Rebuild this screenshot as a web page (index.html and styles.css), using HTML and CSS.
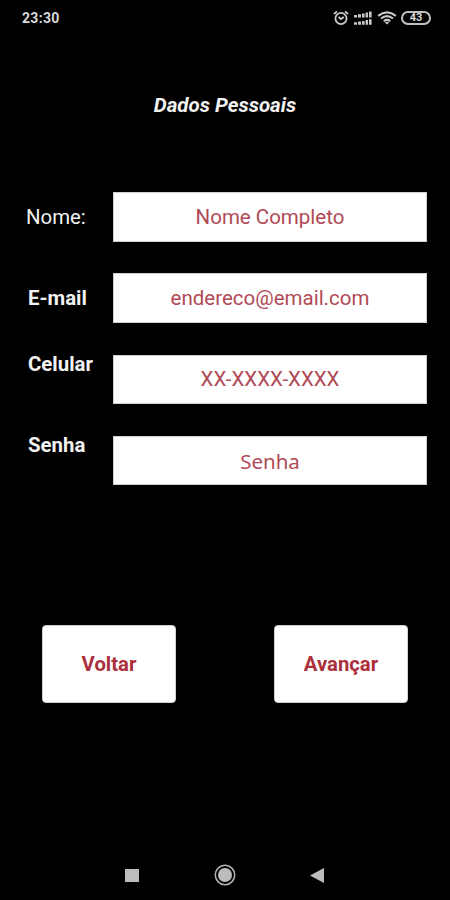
FILE: index.html
```html
<!DOCTYPE html>
<html lang="pt-BR">
<head>
    <meta charset="UTF-8">
    <meta name="viewport" content="width=device-width, initial-scale=1.0">
    <title>Dados Pessoais</title>
    <link rel="stylesheet" href="styles.css">
</head>
<body>
    <div class="status-bar">
        <span class="clock">23:30</span>
        <div class="status-icons">
            <svg class="icon-alarm" width="16" height="16" viewBox="0 0 16 16" fill="none" stroke="#c8c8c8" stroke-width="1.8">
                <circle cx="8" cy="8.5" r="5.6"/>
                <path d="M5.6 6.8L8 9l2.8-2M1 4l3-2.6M15 4l-3-2.6"/>
            </svg>
            <svg class="icon-signal" width="18" height="15" viewBox="0 0 18 15" fill="#c8c8c8">
                <path d="M0 4h3v2.5H0zM4 3.3h3v3.2H4zM8 2.4h2.6v4.1H8zM11.6 1.4H14v5.1h-2.4zM15 .5h2.6v6H15z"/>
                <path d="M0 11.3h3v2.5H0zM4 10.6h3v3.2H4zM8 9.9h2.6v3.9H8zM11.6 9.1H14v4.7h-2.4zM15 8.3h2.6v5.5H15z"/>
            </svg>
            <svg class="icon-wifi" width="20" height="14" viewBox="0 0 20 14" fill="none" stroke="#c8c8c8" stroke-width="2.2">
                <path d="M1.2 4.8Q10-2 18.8 4.8M4 7.5q6-4.6 12 0M6.8 10.1q3.2-2.4 6.4 0"/>
                <path d="M10 13.6l-2.2-2.2q2.2-1.5 4.4 0z" fill="#c8c8c8" stroke="none"/>
            </svg>
            <span class="battery">43</span>
        </div>
    </div>

    <h1>Dados Pessoais</h1>

    <form class="form-dados">
        <div class="field">
            <label class="label-nome" for="nome">Nome:</label>
            <input type="text" id="nome" placeholder="Nome Completo">
        </div>
        <div class="field">
            <label for="email">E-mail</label>
            <input type="email" id="email" placeholder="endereco@email.com">
        </div>
        <div class="field field-top">
            <label for="celular">Celular</label>
            <input type="tel" id="celular" placeholder="XX-XXXX-XXXX">
        </div>
        <div class="field field-top">
            <label for="senha">Senha</label>
            <input class="input-senha" type="password" id="senha" placeholder="Senha">
        </div>
        <div class="buttons">
            <button type="button">Voltar</button>
            <button type="submit">Avançar</button>
        </div>
    </form>

    <div class="nav-bar">
        <svg width="14" height="13" viewBox="0 0 14 13"><path fill="#bdbdbd" d="M0 0h14v13H0z"/></svg>
        <svg width="22" height="22" viewBox="0 0 22 22">
            <circle cx="11" cy="11" r="9.7" fill="none" stroke="#b5b5b5" stroke-width="1.5"/>
            <circle cx="11" cy="11" r="7" fill="#bdbdbd"/>
        </svg>
        <svg width="14" height="15" viewBox="0 0 14 15"><path fill="#bdbdbd" d="M14 0v15L0 7.5z"/></svg>
    </div>
</body>
</html>
```

FILE: styles.css
```css
* {
    box-sizing: border-box;
}

body {
    font-family: Roboto, sans-serif;
    margin: 0;
    height: 900px;
    display: flex;
    flex-direction: column;
    background-color: #000;
    color: #f2f2f2;
    overflow: hidden;
}

.status-bar {
    height: 36px;
    padding: 0 19px 0 22px;
    display: flex;
    justify-content: space-between;
    align-items: center;
}

.clock {
    font-size: 14px;
    font-weight: bold;
    color: #d8d8d8;
    letter-spacing: 0.3px;
}

.status-icons {
    display: flex;
    align-items: center;
}

.icon-signal {
    margin-left: 5px;
}

.icon-wifi {
    margin-left: 5px;
}

.battery {
    width: 30px;
    height: 14px;
    margin-left: 4px;
    border: 2px solid #c0c0c0;
    border-radius: 7px;
    font-size: 11px;
    font-weight: bold;
    line-height: 10px;
    text-align: center;
    color: #d8d8d8;
}

h1 {
    margin: 57px 0 0;
    font-size: 20.5px;
    line-height: 24px;
    font-style: italic;
    font-weight: bold;
    text-align: center;
}

.form-dados {
    margin-top: 75px;
    padding: 0 23px 0 28px;
}

.field {
    display: flex;
    align-items: center;
    height: 49.5px;
    margin-bottom: 31.8px;
}

.field-top {
    align-items: flex-start;
}

label {
    width: 85px;
    font-size: 20.4px;
    line-height: 20px;
    font-weight: bold;
}

.field-top label {
    line-height: 18px;
}

.label-nome {
    font-weight: normal;
    margin-left: -2px;
    width: 87px;
}

.field input {
    flex: 1;
    min-width: 0;
    height: 100%;
    padding: 0;
    border: 1px solid #d0d0d0;
    border-radius: 0;
    background: white;
    font-family: Roboto, sans-serif;
    font-size: 20.5px;
    text-align: center;
    color: #a52a3a;
}

.field input::placeholder {
    color: #b04a56;
    opacity: 1;
}

.field .input-senha {
    font-family: "Noto Sans", sans-serif;
}

.buttons {
    display: flex;
    justify-content: space-between;
    margin-top: 139.8px;
    padding: 0 19px 0 14px;
}

button {
    width: 134px;
    height: 78px;
    border: 1px solid #d0d0d0;
    border-radius: 4px;
    background: white;
    font-family: Roboto, sans-serif;
    font-size: 20.3px;
    font-weight: bold;
    color: #ac303c;
}

.nav-bar {
    margin-top: auto;
    height: 50px;
    padding: 0 126px 0 125px;
    display: flex;
    justify-content: space-between;
    align-items: center;
}
```
